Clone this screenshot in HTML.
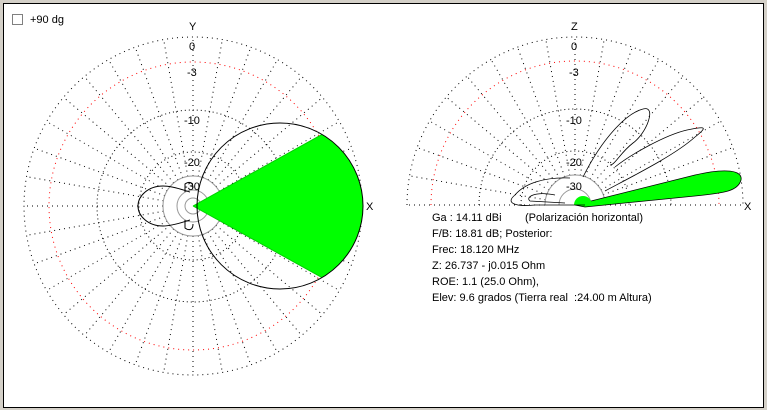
<!DOCTYPE html>
<html><head><style>
html,body{margin:0;padding:0;width:767px;height:410px;overflow:hidden;background:#d4d0c8}
#p{position:absolute;left:3px;top:3px;width:759px;height:403px;background:#fff;border:1px solid #000}
svg{position:absolute;left:0;top:0}
text{font-family:"Liberation Sans",sans-serif;font-size:11px;fill:#000;white-space:pre}
</style></head><body>
<div id="p"></div>
<svg width="767" height="410" viewBox="0 0 767 410">
<defs>
<path id="sp" d="M30 0H169" stroke="#000" stroke-dasharray="1 4" fill="none"/>
</defs>
<rect x="12.5" y="14.5" width="10" height="10" fill="#fff" stroke="#808080"/>
<text x="30" y="23">+90 dg</text>

<g transform="translate(193,206)">
<circle r="169" fill="none" stroke="#000" stroke-dasharray="1 4"/>
<circle r="144" fill="none" stroke="#f00" stroke-dasharray="1 4"/>
<circle r="96" fill="none" stroke="#000" stroke-dasharray="1 3"/>
<circle r="54" fill="none" stroke="#000" stroke-dasharray="1 3"/>
<use href="#sp" transform="rotate(0)"/><use href="#sp" transform="rotate(10)"/><use href="#sp" transform="rotate(20)"/><use href="#sp" transform="rotate(30)"/><use href="#sp" transform="rotate(40)"/><use href="#sp" transform="rotate(50)"/><use href="#sp" transform="rotate(60)"/><use href="#sp" transform="rotate(70)"/><use href="#sp" transform="rotate(80)"/><use href="#sp" transform="rotate(90)"/><use href="#sp" transform="rotate(100)"/><use href="#sp" transform="rotate(110)"/><use href="#sp" transform="rotate(120)"/><use href="#sp" transform="rotate(130)"/><use href="#sp" transform="rotate(140)"/><use href="#sp" transform="rotate(150)"/><use href="#sp" transform="rotate(160)"/><use href="#sp" transform="rotate(170)"/><use href="#sp" transform="rotate(180)"/><use href="#sp" transform="rotate(190)"/><use href="#sp" transform="rotate(200)"/><use href="#sp" transform="rotate(210)"/><use href="#sp" transform="rotate(220)"/><use href="#sp" transform="rotate(230)"/><use href="#sp" transform="rotate(240)"/><use href="#sp" transform="rotate(250)"/><use href="#sp" transform="rotate(260)"/><use href="#sp" transform="rotate(270)"/><use href="#sp" transform="rotate(280)"/><use href="#sp" transform="rotate(290)"/><use href="#sp" transform="rotate(300)"/><use href="#sp" transform="rotate(310)"/><use href="#sp" transform="rotate(320)"/><use href="#sp" transform="rotate(330)"/><use href="#sp" transform="rotate(340)"/><use href="#sp" transform="rotate(350)"/>
<circle r="30" fill="none" stroke="#999"/>
<circle r="16" fill="none" stroke="#999"/>
<circle r="8" fill="none" stroke="#999"/>
<path d="M0 0L129 -71.6A83 83 0 0 1 129 71.6Z" fill="#00ff00"/>
<path d="M0 0L129 -71.6M0 0L129 71.6" stroke="#00d000" fill="none"/>
<circle cx="87" cy="0" r="83" fill="none" stroke="#000"/>
<path d="M-3 -14 C-10 -16 -20 -20 -30 -20 C-45 -20 -55 -10 -55 0 C-55 10 -45 20 -30 20 C-20 20 -10 16 -3 14" fill="none" stroke="#000"/>
<path d="M-8 -14 L-8 -22 C-4 -25 0 -24 0 -18 M-8 14 L-8 22 C-4 25 0 24 0 18" fill="none" stroke="#000"/>
</g>
<text x="189" y="30">Y</text>
<text x="189" y="50">0</text>
<text x="187" y="76">-3</text>
<text x="184" y="124">-10</text>
<text x="184" y="166">-20</text>
<text x="184" y="190">-30</text>
<text x="366" y="210">X</text>

<g transform="translate(575,205)">
<path d="M-168 0A168 168 0 0 1 168 0" fill="none" stroke="#000" stroke-dasharray="1 4"/>
<path d="M-144 0A144 144 0 0 1 144 0" fill="none" stroke="#f00" stroke-dasharray="1 4"/>
<path d="M-96 0A96 96 0 0 1 96 0" fill="none" stroke="#000" stroke-dasharray="1 3"/>
<path d="M-54 0A54 54 0 0 1 54 0" fill="none" stroke="#000" stroke-dasharray="1 3"/>
<use href="#sp" transform="rotate(0)"/><use href="#sp" transform="rotate(-10)"/><use href="#sp" transform="rotate(-20)"/><use href="#sp" transform="rotate(-30)"/><use href="#sp" transform="rotate(-40)"/><use href="#sp" transform="rotate(-50)"/><use href="#sp" transform="rotate(-60)"/><use href="#sp" transform="rotate(-70)"/><use href="#sp" transform="rotate(-80)"/><use href="#sp" transform="rotate(-90)"/><use href="#sp" transform="rotate(-100)"/><use href="#sp" transform="rotate(-110)"/><use href="#sp" transform="rotate(-120)"/><use href="#sp" transform="rotate(-130)"/><use href="#sp" transform="rotate(-140)"/><use href="#sp" transform="rotate(-150)"/><use href="#sp" transform="rotate(-160)"/><use href="#sp" transform="rotate(-170)"/><use href="#sp" transform="rotate(-180)"/>
<path d="M-30 0A30 30 0 0 1 30 0" fill="none" stroke="#999"/>
<path d="M-16 0A16 16 0 0 1 16 0" fill="none" stroke="#999"/>
<path d="M0 0 L120 -30 C150 -37 168 -35 166 -25 C163 -14 150 -12 120 -9 L10 2Z" fill="#00ff00" stroke="#000" stroke-width="0.8"/>
<path d="M-1 0A9 9 0 0 1 17 0Z" fill="#00ff00"/>
<path d="M30 -14 C60 -30 100 -50 120 -68 C135 -80 128 -78 112 -75 C90 -70 55 -50 40 -38" fill="none" stroke="#000" stroke-width="0.8"/>
<path d="M8 -28 C28 -68 52 -92 68 -96 C82 -100 72 -72 58 -62 C45 -52 40 -40 35 -40" fill="none" stroke="#000" stroke-width="0.8"/>
<path d="M-5 -27 C-30 -28 -50 -22 -60 -10 C-70 -2 -60 2 -40 0 L10 0" fill="none" stroke="#000" stroke-width="0.8"/>
<path d="M-20 -10 C-40 -14 -50 -8 -45 -4 L-10 -2" fill="none" stroke="#000" stroke-width="0.8"/>
</g>
<text x="571" y="30">Z</text>
<text x="571" y="50">0</text>
<text x="569" y="76">-3</text>
<text x="566" y="124">-10</text>
<text x="566" y="166">-20</text>
<text x="566" y="190">-30</text>
<text x="744" y="210">X</text>

<text x="432" y="221">Ga : 14.11 dBi</text>
<text x="525" y="221">(Polarización horizontal)</text>
<text x="432" y="237">F/B: 18.81 dB; Posterior:</text>
<text x="432" y="253">Frec: 18.120 MHz</text>
<text x="432" y="269">Z: 26.737 - j0.015 Ohm</text>
<text x="432" y="285">ROE: 1.1 (25.0 Ohm),</text>
<text x="432" y="301">Elev: 9.6 grados (Tierra real  :24.00 m Altura)</text>
</svg>
</body></html>
